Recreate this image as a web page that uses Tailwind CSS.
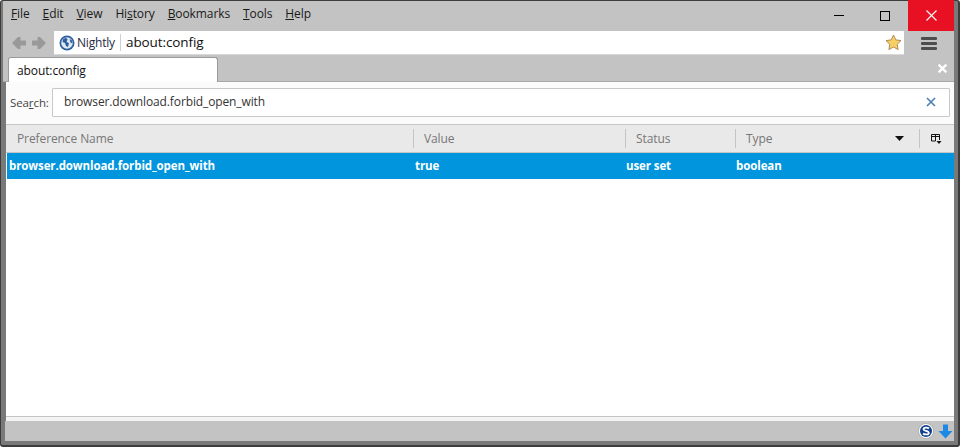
<!DOCTYPE html>
<html lang="en">
<head>
  <meta charset="UTF-8">
  <title>about:config</title>
  <script src="https://cdn.jsdelivr.net/npm/@tailwindcss/browser@4"></script>
</head>
<body class="w-[960px] h-[447px] overflow-hidden bg-white font-['Open_Sans',sans-serif]">
  <div class="w-[960px] h-[447px] flex flex-col bg-[#797979] border-t border-l border-[#3c3c3c] border-r-2 border-b-2 rounded-[3px] pl-[5px] pr-1 pb-1 box-border">
    <!-- title bar / menu -->
    <div class="h-[30px] -ml-[3px] -mr-0 flex items-start bg-[#c3c3c3] text-[12px] leading-[16px] text-[#1a1a1a] tracking-[-0.1px]">
      <div class="flex gap-[13px] pl-[8px] pt-[5px]">
        <span><u>F</u>ile</span>
        <span><u>E</u>dit</span>
        <span><u>V</u>iew</span>
        <span>Hi<u>s</u>tory</span>
        <span><u>B</u>ookmarks</span>
        <span><u>T</u>ools</span>
        <span><u>H</u>elp</span>
      </div>
      <div class="ml-auto flex h-[30px] -mt-px items-start">
        <div class="w-[46px] h-[31px] flex items-center justify-center">
          <div class="w-[10px] h-px bg-black"></div>
        </div>
        <div class="w-[46px] h-[31px] flex items-center justify-center">
          <div class="w-[10px] h-[10px] border border-black"></div>
        </div>
        <div class="w-[46px] h-[31px] bg-[#e81123] flex items-center justify-center">
          <svg width="11" height="11" viewBox="0 0 11 11"><path d="M.5.5l10 10M10.5.5l-10 10" stroke="#fff" stroke-width="1.1" fill="none"/></svg>
        </div>
      </div>
    </div>
    <!-- nav bar -->
    <div class="h-[24px] -ml-[3px] flex items-stretch bg-[#c3c3c3]">
      <div class="w-[51px] flex items-center gap-[6px] pl-[9px]">
        <svg width="14" height="12" viewBox="0 0 14 12"><path d="M0 6l6-6h2.500v3.500H14v5H8.500V12H6z" fill="#999"/></svg>
        <svg width="14" height="12" viewBox="0 0 14 12"><path d="M14 6L8 0H5.500v3.500H0v5h5.500V12H8z" fill="#999"/></svg>
      </div>
      <div class="w-[850px] bg-white flex items-center border-b border-[#d8d8d8]">
        <svg class="ml-[5px]" width="16" height="16" viewBox="0 0 16 16">
          <circle cx="8" cy="8" r="7.500" fill="#2f5f9e"/>
          <circle cx="8" cy="8" r="5.800" fill="#dfe8f2"/>
          <path d="M4 4.500l3-2 1.500 2-1 2.500 2.500 1-1 4-2-1-1-3-2.500-1zM10.500 4l2.500 1.500.5 3-2-1z" fill="#2f5f9e"/>
        </svg>
        <span class="ml-[2px] w-[42px] text-[12px] tracking-[-0.2px] text-[#1f2a44]">Nightly</span>
        <div class="ml-[1px] w-px h-[17px] bg-[#cfcfcf]"></div>
        <span class="ml-[5px] text-[13.500px] tracking-[-0.1px] text-[#111]">about:config</span>
        <svg class="ml-auto mr-[2px]" width="17" height="17" viewBox="0 0 17 17">
          <path d="M8.500 1l2.300 4.900 5.200.7-3.800 3.700.9 5.300-4.600-2.600-4.600 2.600.9-5.300L1 6.600l5.200-.7z" fill="#f8cf63" stroke="#b08c55" stroke-width="1"/>
        </svg>
      </div>
      <div class="flex-1 flex flex-col items-center justify-center gap-[2px] pl-[1px] pr-[2px]">
        <div class="w-[16px] h-[3px] rounded-[1px] bg-[#4d4d4d]"></div>
        <div class="w-[16px] h-[3px] rounded-[1px] bg-[#4d4d4d]"></div>
        <div class="w-[16px] h-[3px] rounded-[1px] bg-[#4d4d4d]"></div>
      </div>
    </div>
    <!-- tab strip -->
    <div class="h-[27px] -ml-[3px] flex items-end bg-[#c3c3c3] border-b border-[#a8a8a8] relative">
      <div class="ml-[5px] w-[210px] h-[25px] -mb-px bg-white border border-b-0 border-[#9a9a9a] rounded-t-[3px] pl-[8px] text-[12px] leading-[25px] tracking-[-0.1px] text-[#111]">about:config</div>
      <svg class="ml-auto mr-[7px] mb-[8px]" width="9" height="9" viewBox="0 0 9 9"><path d="M1.500 1.500l6 6M7.500 1.500l-6 6" stroke="#fff" stroke-width="2.400" stroke-linecap="square"/></svg>
    </div>
    <!-- content -->
    <div class="flex-1 min-h-0 flex flex-col bg-white">
      <div class="h-[42px] flex items-center bg-[#fbfbfb] pl-[4px] pr-[4px]">
        <span class="w-[42px] text-[11.500px] tracking-[-0.1px] text-[#444]">Sea<u>r</u>ch:</span>
        <div class="flex-1 h-[29px] -mt-[2px] bg-white border border-[#c9c9c9] rounded-[1px] flex items-center pl-[11px] pr-[13px]">
          <span class="text-[12px] tracking-[-0.12px] text-[#333]">browser.download.forbid_open_with</span>
          <svg class="ml-auto" width="10" height="10" viewBox="0 0 10 10"><path d="M1 1l8 8M9 1l-8 8" stroke="#4a7fb5" stroke-width="1.600"/></svg>
        </div>
      </div>
      <div class="h-[29px] flex items-stretch bg-[#e9e9e9] border-t border-[#c6c6c6] border-b border-b-[#c6c6c6] text-[12px] tracking-[-0.1px] text-[#777]">
        <div class="w-[407px] pl-[11px] flex items-center">Preference Name</div>
        <div class="w-[212px] pl-[10px] flex items-center my-[4px] border-l border-[#c4c4c4]">Value</div>
        <div class="w-[110px] pl-[10px] flex items-center my-[4px] border-l border-[#c4c4c4]">Status</div>
        <div class="w-[184px] pl-[10px] pr-[15px] flex items-center justify-between my-[4px] border-l border-[#c4c4c4]">
          <span>Type</span>
          <svg width="9" height="5" viewBox="0 0 9 5"><path d="M0 0h9L4.500 5z" fill="#111"/></svg>
        </div>
        <div class="flex-1 flex items-center pl-[11px] my-[4px] border-l border-[#c4c4c4]">
          <svg width="11" height="11" viewBox="0 0 11 11"><path d="M.5 8V1.500h8V7M.5 3.500h8M4.500 1.500V8M.5 8h4" stroke="#111" fill="none"/><path d="M5.500 8h5L8 11z" fill="#111"/></svg>
        </div>
      </div>
      <div class="h-[26px] ml-[1px] flex items-center bg-[#0095dd] text-white font-bold text-[11.500px] tracking-[-0.1px]">
        <div class="w-[407px] pl-[2px]">browser.download.forbid_open_with</div>
        <div class="w-[212px] pl-[1px]">true</div>
        <div class="w-[110px]">user set</div>
        <div>boolean</div>
      </div>
      <div class="flex-1 min-h-0 bg-white"></div>
      <div class="h-[5px] border-t border-[#c4c4c4] bg-[#f4f4f4]"></div>
    </div>
    <!-- status bar -->
    <div class="h-[20px] flex items-center justify-end gap-[4px] bg-[#c3c3c3] -ml-px pr-[1px]">
      <svg width="16" height="16" viewBox="0 0 16 16">
        <circle cx="8" cy="8" r="7.500" fill="#fff" stroke="#8a8a8a" stroke-width="0.500"/>
        <circle cx="8" cy="8" r="6" fill="#0f3f8c"/>
        <path d="M11 5.500C9.500 4.300 5.500 4.300 5.500 6.200 5.500 8.300 10.800 7.600 10.800 9.900 10.800 11.900 6.500 11.800 5 10.500" stroke="#fff" stroke-width="1.800" fill="none"/>
      </svg>
      <svg width="15" height="15" viewBox="0 0 15 15"><path d="M5 .5h5v6.500h4.500l-7 7.500-7-7.500H5z" fill="#1e88e5"/></svg>
    </div>
  </div>
</body>
</html>
